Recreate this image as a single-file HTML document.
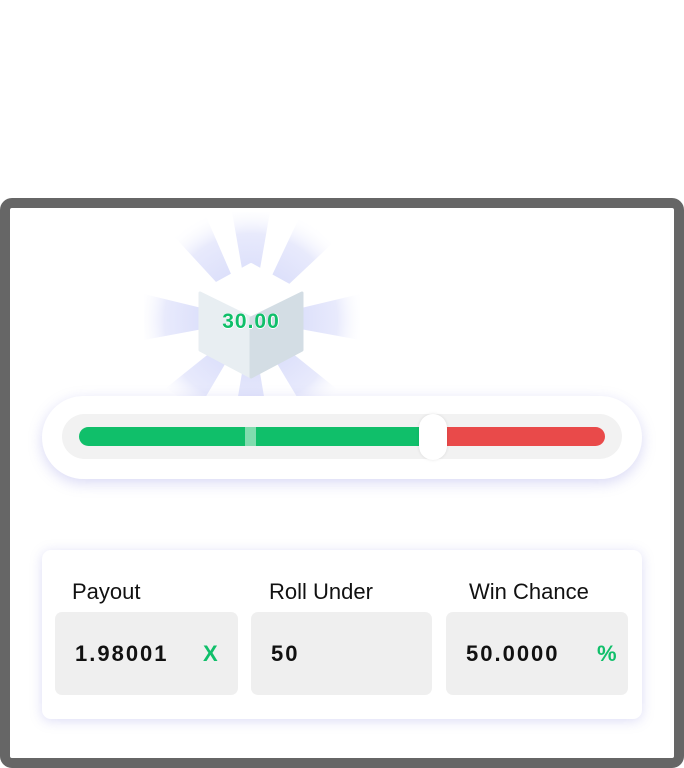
<!DOCTYPE html>
<html><head><meta charset="utf-8"><style>
*{margin:0;padding:0;box-sizing:border-box}
body{width:684px;height:768px;background:#fff;position:relative;overflow:hidden;font-family:"Liberation Sans","DejaVu Sans",sans-serif}
.frame{position:absolute;left:0;top:198px;width:684px;height:570px;border:10px solid #666;border-radius:12px;background:#fff}
.abs{position:absolute}
.pill{left:42px;top:396px;width:600px;height:83px;border-radius:42px;background:#fff;box-shadow:0 4px 14px rgba(120,120,220,.28)}
.track{left:62px;top:414px;width:560px;height:45px;border-radius:23px;background:#f2f2f2}
.green{left:79px;top:427px;width:350px;height:19px;border-radius:10px 0 0 10px;background:#10bf6a}
.red{left:429px;top:427px;width:176px;height:19px;border-radius:0 10px 10px 0;background:#e94a4a}
.mark{left:245px;top:427px;width:11px;height:19px;background:#80dcae}
.thumb{left:419px;top:414px;width:28px;height:46px;border-radius:14px;background:#fff;box-shadow:0 0 3px rgba(0,0,0,.1)}
.card{left:42px;top:550px;width:600px;height:169px;border-radius:9px;background:#fff;box-shadow:0 2px 12px rgba(120,120,220,.25)}
.lbl{font-size:22px;color:#111;top:579px}
.box{top:612px;height:83px;border-radius:7px;background:#efefef}
.val{font-size:22px;font-weight:bold;color:#111;top:641px;letter-spacing:2px}
.unit{font-size:22px;font-weight:bold;color:#10bf6a;top:641px}
.num{left:201px;top:310px;width:100px;text-align:center;font-size:21px;font-weight:bold;color:#10bf6a;letter-spacing:1px;text-shadow:0 1px 0 #fff,1px 0 0 #fff}
</style></head><body>
<div class="frame"></div>
<svg class="abs" style="left:140px;top:210px" width="230" height="210" viewBox="140 210 230 210">
<defs><radialGradient id="rg" cx="251" cy="320" r="115" gradientUnits="userSpaceOnUse"><stop offset="0.3" stop-color="#d8dcfa"/><stop offset="0.75" stop-color="#e8eafc"/><stop offset="1" stop-color="#fff" stop-opacity="0"/></radialGradient></defs>
<g fill="url(#rg)">
<polygon points="251,320 232,212 270,212"/>
<polygon points="251,320 170,232 205,214"/>
<polygon points="251,320 300,216 338,238"/>
<polygon points="251,320 144,294 144,340"/>
<polygon points="251,320 360,294 360,340"/>
<polygon points="251,320 166,388 198,410"/>
<polygon points="251,320 306,412 338,390"/>
<polygon points="251,320 234,420 268,420"/>
</g>
<polygon points="251,265 302,293 251,318 200,293" fill="#fff" stroke="#fff" stroke-width="4" stroke-linejoin="round"/>
<polygon points="200,293 251,318 251,377 200,350" fill="#e8eef2" stroke="#e8eef2" stroke-width="3" stroke-linejoin="round"/>
<polygon points="302,293 251,318 251,377 302,350" fill="#d3dde4" stroke="#d3dde4" stroke-width="3" stroke-linejoin="round"/>
</svg>
<div class="abs num">30.00</div>
<div class="abs pill"></div>
<div class="abs track"></div>
<div class="abs green"></div>
<div class="abs red"></div>
<div class="abs mark"></div>
<div class="abs thumb"></div>
<div class="abs card"></div>
<div class="abs lbl" style="left:72px">Payout</div>
<div class="abs lbl" style="left:269px">Roll Under</div>
<div class="abs lbl" style="left:469px">Win Chance</div>
<div class="abs box" style="left:55px;width:183px"></div>
<div class="abs box" style="left:251px;width:181px"></div>
<div class="abs box" style="left:446px;width:182px"></div>
<div class="abs val" style="left:75px">1.98001</div>
<div class="abs unit" style="left:203px">X</div>
<div class="abs val" style="left:271px">50</div>
<div class="abs val" style="left:466px">50.0000</div>
<div class="abs unit" style="left:597px">%</div>
</body></html>
